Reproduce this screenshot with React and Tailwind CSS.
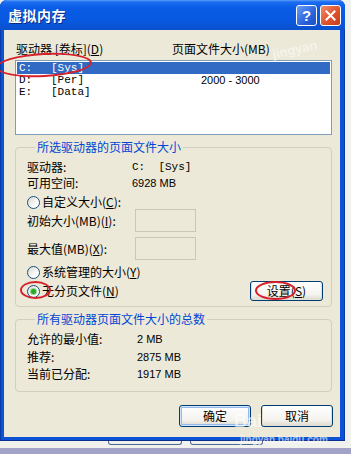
import React from "react";

const U = ({ children }) => <span className="underline underline-offset-1">{children}</span>;

function Radio({ checked }) {
  return (
    <span className="w-[13px] h-[13px] rounded-full border border-[#1c5180] bg-[linear-gradient(135deg,#d8d6cc,#ffffff_70%)] flex items-center justify-center shrink-0">
      {checked && <span className="w-[5px] h-[5px] rounded-full bg-[#2aa52a] shadow-[0_0_0_1px_#8bd88b]" />}
    </span>
  );
}

function XPButton({ children, w = "w-[72px]", h = "h-[22px]", def = false }) {
  return (
    <div
      className={`${w} ${h} rounded-[3px] border border-[#003c74] bg-[linear-gradient(to_bottom,#ffffff,#f4f3ee_70%,#dcd8cc)] flex items-center justify-center text-[12px] leading-[14px] text-black ${
        def ? "shadow-[inset_0_0_0_1px_#cee7ff,inset_0_0_0_2px_#98b8ea]" : "shadow-[inset_0_-1px_0_1px_#e3e0d6]"
      }`}
    >
      {children}
    </div>
  );
}

export default function App() {
  return (
    <div className="w-[351px] h-[454px] bg-[#f1f1ee] flex flex-col overflow-hidden relative font-['Noto_Sans_CJK_SC','Noto_Sans',sans-serif] text-black">
      {/* window */}
      <div className="w-[345px] h-[441px] shrink-0 flex flex-col bg-[#0b52d6] rounded-t-[7px] shadow-[inset_0_-1px_0_#0a2e8c,inset_-1px_0_0_#0a3aa8,inset_1px_0_0_#0a3aa8]">
        {/* title bar */}
        <div className="h-[30px] shrink-0 flex items-center pl-[8px] pr-[4px] rounded-t-[7px] bg-[linear-gradient(to_bottom,#5a9cf8_0px,#1a6cf0_2px,#0a5ce6_8px,#0858e0_70%,#0b50cc_100%)]">
          <span className="text-white font-bold text-[14px] leading-[16px] tracking-[0.5px] [text-shadow:1px_1px_0_#0a2a80]">虚拟内存</span>
          <div className="ml-auto flex gap-[3px]">
            <div className="w-[21px] h-[21px] rounded-[3px] border border-white bg-[linear-gradient(135deg,#6a9cf5,#2a63dd_60%,#1d4fc4)] flex items-center justify-center">
              <span className="text-white font-bold text-[15px] leading-[15px] font-['Liberation_Sans',sans-serif]">?</span>
            </div>
            <div className="w-[21px] h-[21px] rounded-[3px] border border-white bg-[linear-gradient(135deg,#f08a6c,#e0532c_55%,#c43d1c)] flex items-center justify-center">
              <svg width="11" height="11" viewBox="0 0 11 11">
                <path d="M1.5 1.5 L9.5 9.5 M9.5 1.5 L1.5 9.5" stroke="white" strokeWidth="2" strokeLinecap="square" />
              </svg>
            </div>
          </div>
        </div>

        {/* body */}
        <div className="flex-1 ml-[4px] mr-[5px] mb-[4px] bg-[#ece9d8] flex flex-col pl-[11px] pr-[8px] pt-[12px]">
          {/* header */}
          <div className="h-[14px] flex text-[12px] leading-[14px]">
            <span className="w-[157px] pl-[1px]">驱动器 [卷标](<U>D</U>)</span>
            <span>页面文件大小(MB)</span>
          </div>
          {/* list */}
          <div className="mt-[4px] h-[75px] border border-[#7f9db9] bg-white pt-[1px] px-[1px] font-['Liberation_Mono',monospace] text-[11px] leading-[12px]">
            <div className="h-[12px] flex bg-[#316ac5] text-white">
              <span className="w-[34px] pl-[2px]">C:</span>
              <span>[Sys]</span>
            </div>
            <div className="h-[12px] flex">
              <span className="w-[34px] pl-[2px]">D:</span>
              <span className="w-[150px]">[Per]</span>
              <span className="font-['Liberation_Sans',sans-serif]">2000 - 3000</span>
            </div>
            <div className="h-[12px] flex">
              <span className="w-[34px] pl-[2px]">E:</span>
              <span>[Data]</span>
            </div>
          </div>

          {/* group 1 */}
          <fieldset className="mt-[5px] border border-[#d0d0bf] rounded-[4px] pl-[11px] pr-[8px] pb-[5px] text-[12px] leading-[14px]">
            <legend className="ml-[8px] px-[2px] text-[#0046d5] leading-[14px]">所选驱动器的页面文件大小</legend>
            <div className="mt-[6px] h-[14px] flex items-center">
              <span className="w-[105px] leading-[14px]">驱动器:</span>
              <span className="font-['Liberation_Mono',monospace] text-[11px] whitespace-pre">C:  [Sys]</span>
            </div>
            <div className="mt-[2px] h-[14px] flex items-center">
              <span className="w-[105px] leading-[14px]">可用空间:</span>
              <span className="font-['Liberation_Sans',sans-serif] text-[11px]">6928 MB</span>
            </div>
            <div className="mt-[5px] h-[14px] flex items-center gap-[2px]">
              <Radio />
              <span>自定义大小(<U>C</U>):</span>
            </div>
            <div className="h-[23px] flex items-center">
              <span className="w-[108px]">初始大小(MB)(<U>I</U>):</span>
              <div className="w-[61px] h-[23px] border border-[#c9c7ba] bg-[#ece9d8]" />
            </div>
            <div className="mt-[5px] h-[23px] flex items-center">
              <span className="w-[108px]">最大值(MB)(<U>X</U>):</span>
              <div className="w-[61px] h-[23px] border border-[#c9c7ba] bg-[#ece9d8]" />
            </div>
            <div className="mt-[5px] h-[14px] flex items-center gap-[2px]">
              <Radio />
              <span>系统管理的大小(<U>Y</U>)</span>
            </div>
            <div className="mt-[2px] h-[20px] flex items-center">
              <div className="flex items-center gap-[2px]">
                <Radio checked />
                <span>无分页文件(<U>N</U>)</span>
              </div>
              <div className="ml-auto">
                <XPButton w="w-[73px]" h="h-[20px]">设置(<U>S</U>)</XPButton>
              </div>
            </div>
          </fieldset>

          {/* group 2 */}
          <fieldset className="mt-[5px] border border-[#d0d0bf] rounded-[4px] pl-[11px] pr-[8px] pb-[10px] text-[12px] leading-[14px]">
            <legend className="ml-[8px] px-[2px] text-[#0046d5] leading-[14px]">所有驱动器页面文件大小的总数</legend>
            <div className="mt-[6px] h-[14px] flex">
              <span className="w-[110px]">允许的最小值:</span>
              <span className="font-['Liberation_Sans',sans-serif] text-[11px]">2 MB</span>
            </div>
            <div className="mt-[4px] h-[14px] flex">
              <span className="w-[110px]">推荐:</span>
              <span className="font-['Liberation_Sans',sans-serif] text-[11px]">2875 MB</span>
            </div>
            <div className="mt-[3px] h-[14px] flex">
              <span className="w-[110px]">当前已分配:</span>
              <span className="font-['Liberation_Sans',sans-serif] text-[11px]">1917 MB</span>
            </div>
          </fieldset>

          {/* buttons */}
          <div className="mt-[13px] -mr-[1px] flex justify-end gap-[10px]">
            <XPButton def>确定</XPButton>
            <XPButton>取消</XPButton>
          </div>
        </div>
      </div>

      {/* parent window fragments */}
      <div className="h-[7px] shrink-0 flex">
        <div className="ml-[108px] w-[74px] h-[4px] border-x border-b border-[#4d6a94] rounded-b-[3px]" />
        <div className="ml-[8px] w-[73px] h-[4px] border-x border-b border-[#4d6a94] rounded-b-[3px]" />
      </div>
      <div className="flex-1 bg-[#a3a3c9]" />

      {/* red annotation ellipses */}
      <div className="absolute left-[-4px] top-[53px] w-[96px] h-[24px] rounded-[50%] border-2 border-[#d6212a] -rotate-3" />
      <div className="absolute left-[20px] top-[281px] w-[31px] h-[18px] rounded-[50%] border-2 border-[#d6212a]" />
      <div className="absolute left-[255px] top-[281px] w-[41px] h-[19px] rounded-[50%] border-2 border-[#d6212a]" />

      {/* watermarks */}
      <span className="absolute left-[272px] top-[40px] text-[13px] font-bold text-white/50 font-['Liberation_Sans',sans-serif] -rotate-12">jingyan</span>
      <span className="absolute left-[234px] top-[408px] text-[18px] font-bold text-white/60 font-['Liberation_Sans',sans-serif]">Bai</span>
      <span className="absolute left-[240px] top-[432px] text-[10px] font-bold text-white/60 font-['Liberation_Sans',sans-serif]">jingyan.baidu.com</span>
    </div>
  );
}
